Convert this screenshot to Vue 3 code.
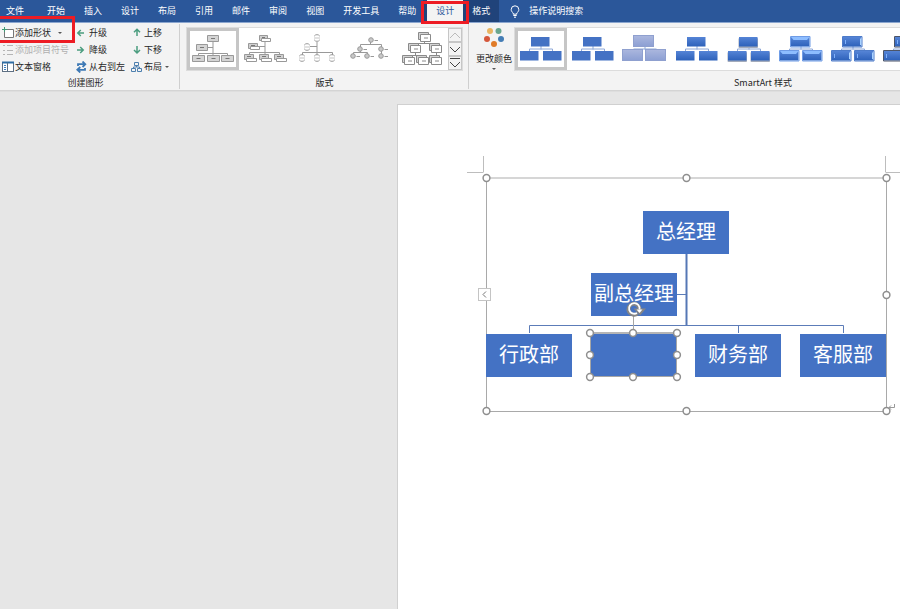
<script setup>
const tabs = ['开始', '插入', '设计', '布局', '引用', '邮件', '审阅', '视图', '开发工具', '帮助']

const nodes = [
  { id: 'gm', label: '总经理', x: 157, y: 33 },
  { id: 'vgm', label: '副总经理', x: 105, y: 95 },
  { id: 'admin', label: '行政部', x: 0, y: 156 },
  { id: 'blank', label: '', x: 105, y: 156 },
  { id: 'finance', label: '财务部', x: 209, y: 156 },
  { id: 'service', label: '客服部', x: 314, y: 156 },
]

const frameHandles = [
  [0, 0], [200, 0], [400, 0],
  [400, 117],
  [0, 233], [200, 233], [400, 233],
]

const shapeHandles = [
  [104, 155], [147, 155], [191, 155],
  [104, 177], [191, 177],
  [104, 199], [147, 199], [191, 199],
]

const styles = [
  { id: 's1', name: '简单填充', fill: '#4472c4' },
  { id: 's2', name: '白色轮廓', fill: '#4472c4' },
  { id: 's3', name: '细微效果', fill: 'url(#pale)', edge: '#8fa0cf', big: true },
  { id: 's4', name: '中等效果', fill: 'url(#deep)' },
  { id: 's5', name: '强烈效果', fill: 'url(#deep)', shadow: true },
  { id: 's6', name: '优雅', fill: 'url(#deep)', gloss: true },
  { id: 's7', name: '嵌入', fill: 'url(#deep)', inset: true },
  { id: 's8', name: '卡通', fill: 'url(#deep)', inset: true, edge: '#4c5568' },
  { id: 's9', name: '砖块', fill: '#4472c4' },
  { id: 's10', name: '平面', fill: '#4472c4' },
]

const cells = [
  { x: 16, y: 9 },
  { x: 5, y: 23 },
  { x: 28, y: 23 },
]
</script>

<template>
  <div class="app">
    <nav class="tabs" aria-label="功能区">
      <button class="tab file">文件</button>
      <button v-for="t in tabs" :key="t" class="tab">{{ t }}</button>
      <div class="context">
        <button class="tab active">设计</button>
        <button class="tab">格式</button>
        <span class="mark mark-tab"></span>
      </div>
      <button class="tab tell">
        <svg width="10" height="13" viewBox="0 0 10 13" fill="none" stroke="#fff">
          <path d="M3.2 9.2V8C2 7 1.2 6 1.2 4.6A3.8 3.8 0 0 1 8.8 4.6C8.8 6 8 7 6.8 8V9.2Z" />
          <path d="M3.3 10.5H6.7M4 12.2H6" />
        </svg>
        操作说明搜索
      </button>
    </nav>

    <div class="ribbon">
      <section class="group create">
        <div class="commands">
          <div class="column first">
            <button class="cmd">
              <svg width="13" height="12" viewBox="0 0 13 12" fill="none">
                <path d="M5 2.5H11.5V10.500H2.500V5" fill="#fff" stroke="#777" />
                <path d="M2.500 0V5M0 2.500H5" stroke="#3f9c75" />
              </svg>
              添加形状
              <i class="caret wide"></i>
            </button>
            <button class="cmd" disabled>
              <svg width="13" height="12" viewBox="0 0 13 12" stroke="#b5b5b5">
                <path d="M1 1.500H3M1 6.500H3M1 10.500H3M5 1.500H11M5 6.500H11M5 10.500H11" />
              </svg>
              添加项目符号
            </button>
            <button class="cmd">
              <svg width="13" height="12" viewBox="0 0 13 12" fill="none">
                <rect x="0.500" y="1.500" width="11" height="9" fill="#fff" stroke="#5d6f83" />
                <path d="M0 1.500H12" stroke="#2e6da4" stroke-width="2" />
                <path d="M5.500 2V10" stroke="#5d6f83" />
                <path d="M2 4.500H4M2 6.500H4M2 8.500H4" stroke="#3c7fc0" />
              </svg>
              文本窗格
            </button>
          </div>
          <div class="column second">
            <button class="cmd">
              <svg width="13" height="12" viewBox="0 0 13 12" fill="none" stroke="#4b9d7f" stroke-width="1.500">
                <path d="M8 6H2M4.800 3L1.800 6L4.800 9" />
              </svg>
              升级
            </button>
            <button class="cmd">
              <svg width="13" height="12" viewBox="0 0 13 12" fill="none" stroke="#4b9d7f" stroke-width="1.500">
                <path d="M1 6H7M4.200 3L7.200 6L4.200 9" />
              </svg>
              降级
            </button>
            <button class="cmd">
              <svg width="13" height="12" viewBox="0 0 13 12" fill="none" stroke="#3e79b5" stroke-width="1.800">
                <path d="M2 5V3.200H9M6.500 0.500L9.300 3.200L6.500 6" />
                <path d="M9 7V8.800H2M4.300 6L1.300 8.800L4.300 11.500" />
              </svg>
              从右到左
            </button>
          </div>
          <div class="column third">
            <button class="cmd">
              <svg width="13" height="12" viewBox="0 0 13 12" fill="none" stroke="#4b9d7f" stroke-width="1.500">
                <path d="M6 9V3M3 5.200L6 2.200L9 5.200" />
              </svg>
              上移
            </button>
            <button class="cmd">
              <svg width="13" height="12" viewBox="0 0 13 12" fill="none" stroke="#4b9d7f" stroke-width="1.500">
                <path d="M6 2V8.500M3 6L6 9L9 6" />
              </svg>
              下移
            </button>
            <button class="cmd">
              <svg width="13" height="12" viewBox="0 0 13 12" fill="none" stroke="#4c7fae">
                <path d="M3.500 1.500H7.500V4.500H3.500ZM0.500 7.500H4.500V10.500H0.500ZM6.500 7.500H10.500V10.500H6.500ZM5.500 4.500V6M2.500 7.500V6H8.500V7.500" />
              </svg>
              布局
              <i class="caret"></i>
            </button>
          </div>
          <span class="mark mark-add"></span>
        </div>
        <h2>创建图形</h2>
      </section>

      <section class="group layouts">
        <div class="gallery">
          <button class="item selected" aria-label="组织结构图">
            <svg width="52" height="42" viewBox="0 0 52 42" fill="#d4d4d4" stroke="#999">
              <path d="M26 13V28M21 19.500H26M11.500 28V25.500H40.500V28" fill="none" />
              <path d="M20.500 7.500H31.500V13.500H20.500ZM9.500 16.500H20.500V22.500H9.500ZM5.500 27.500H17.500V33.500H5.500ZM20.500 27.500H32.500V33.500H20.500ZM34.500 27.500H46.500V33.500H34.500Z" />
              <path d="M24 10.500H28M13 19.500H17M9.500 30.500H13.500M24.500 30.500H28.500M38.500 30.500H42.500" stroke="#777" />
            </svg>
          </button>
          <button class="item" aria-label="姓名和职务组织结构图">
            <svg width="52" height="42" viewBox="0 0 52 42" fill="#d0d0d0" stroke="#999">
              <path d="M26 13V26M19 18.500H26M10.500 26V24.500H40.500V26" fill="none" />
              <path d="M20.500 7.500H28.500V12.500H20.500ZM9.500 15.500H18.500V20.500H9.500ZM5.500 26.500H14.500V31.500H5.500ZM20.500 26.500H29.500V31.500H20.500ZM35.500 26.500H44.500V31.500H35.500Z" />
              <path d="M22.500 10.500H31.500V13.500H22.500ZM11.500 18.500H20.500V21.500H11.500ZM7.500 30.500H17.500V33.500H7.500ZM22.500 30.500H32.500V33.500H22.500ZM37.500 30.500H47.500V33.500H37.500Z" fill="#fff" />
              <path d="M23 9.500H26M12 17.500H16M8 28.500H12M23 28.500H27M38 28.500H42" stroke="#777" />
            </svg>
          </button>
          <button class="item" aria-label="半圆组织结构图">
            <svg width="52" height="42" viewBox="0 0 52 42" fill="none" stroke="#999">
              <path d="M26 14V27M19 18.500H26M11.500 27V24.500H41.500V27" />
              <g v-for="p in [[26, 10], [16, 19], [11, 30], [26, 30], [41, 30]]" :key="p.join()">
                <path :transform="`translate(${p[0]} ${p[1]})`" d="M-2.800 -1.800A3.300 3.300 0 0 1 2.800 -1.800M-2.800 1.800A3.300 3.300 0 0 0 2.800 1.800" />
                <path :transform="`translate(${p[0]} ${p[1]})`" d="M-3 0H3" stroke="#c4c4c4" />
              </g>
            </svg>
          </button>
          <button class="item" aria-label="圆形图片层次结构">
            <svg width="52" height="42" viewBox="0 0 52 42" fill="#c9c9c9" stroke="#999">
              <path d="M27.500 14V16.500M17.500 19V16.500H38.500V28M17.500 22V24.500M10.500 27V24.500H24.500V27" fill="none" />
              <g v-for="p in [[28, 12], [17, 21], [38, 21], [10, 28], [24, 28], [38, 28]]" :key="p.join()">
                <circle :cx="p[0]" :cy="p[1]" r="2.300" />
                <path :transform="`translate(${p[0]} ${p[1]})`" d="M3.500 0.500H7" />
              </g>
            </svg>
          </button>
          <button class="item" aria-label="层次结构">
            <svg width="52" height="42" viewBox="0 0 52 42" fill="#fff" stroke="#8a8a8a">
              <path d="M29.500 13V15.500M19.500 18V15.500H41.500V18M14.500 29V27.500H28.500V29M20.500 25V27.500M41.500 25V29" fill="none" />
              <g v-for="p in [[25, 6], [15, 17], [36, 17], [9, 29], [23, 29], [36, 29]]" :key="p.join()">
                <path :transform="`translate(${p[0]} ${p[1]})`" d="M-1.500 -1.500H8.500V5.500H-1.500Z" fill="#d4d4d4" />
                <path :transform="`translate(${p[0]} ${p[1]})`" d="M0.500 0.500H10.500V7.500H0.500ZM4 4H8" />
              </g>
            </svg>
          </button>
          <div class="scroller">
            <button aria-label="上一行" disabled>
              <svg width="12" height="12" viewBox="0 0 12 12" fill="none" stroke="#bbb"><path d="M1 9L6 4L11 9" /></svg>
            </button>
            <button aria-label="下一行">
              <svg width="12" height="12" viewBox="0 0 12 12" fill="none" stroke="#444"><path d="M1 4L6 9L11 4" /></svg>
            </button>
            <button aria-label="其他">
              <svg width="12" height="12" viewBox="0 0 12 12" fill="none" stroke="#444"><path d="M1 1.500H11M1 5L6 10L11 5" /></svg>
            </button>
          </div>
        </div>
        <h2>版式</h2>
      </section>

      <section class="group styles">
        <div class="row">
          <button class="colors">
            <svg width="22" height="22" viewBox="0 0 22 22">
              <circle cx="7" cy="4" r="3" fill="#e9b562" />
              <circle cx="15.500" cy="4" r="3" fill="#69a68e" />
              <circle cx="4" cy="12" r="3" fill="#d5573b" />
              <circle cx="18" cy="12" r="3" fill="#447db5" />
              <circle cx="11" cy="17" r="3" fill="#e07b28" />
            </svg>
            <span>更改颜色</span>
            <i class="caret"></i>
          </button>
          <div class="gallery">
            <button v-for="(s, i) in styles" :key="s.id" class="item" :class="{ selected: i === 0 }" :aria-label="s.name">
              <svg width="52" height="42" viewBox="0 0 52 42">
                <defs v-if="i === 0">
                  <linearGradient id="pale" x1="0" y1="0" x2="0" y2="1">
                    <stop offset="0" stop-color="#abb7de" /><stop offset="1" stop-color="#8c9fd3" />
                  </linearGradient>
                  <linearGradient id="deep" x1="0" y1="0" x2="0" y2="1">
                    <stop offset="0" stop-color="#5584d6" /><stop offset="1" stop-color="#2d61ba" />
                  </linearGradient>
                </defs>
                <path d="M26 18V21.500M14.500 23V21H37.500V23" fill="none" stroke="#8ea8d8" />
                <g v-for="c in cells" :key="c.x + s.id" :transform="`translate(${c.x} ${c.y})`">
                  <rect v-if="s.shadow" x="-0.500" y="1" width="19.500" height="10" rx="1" fill="#a3abbb" />
                  <rect v-if="s.big" x="-1.500" y="-1.500" width="20" height="11" :fill="s.fill" :stroke="s.edge" />
                  <rect v-else width="18.500" height="9.500" :fill="s.fill" />
                  <path v-if="s.gloss" d="M-0.500 -0.500H19V10H-0.500Z" fill="none" stroke="#6f9ce6" />
                  <path v-if="s.gloss" d="M0 0H18.500L16 3H2.500Z" fill="#8dbdff" />
                  <path v-if="s.inset" d="M-0.500 -0.500H19V10H-0.500Z" fill="none" :stroke="s.edge || '#4d7bc9'" />
                  <path v-if="s.inset" d="M18.500 0.500V9L17 7.500V2Z" fill="#a9d2ff" />
                  <path v-if="s.inset" d="M2.500 3V7" stroke="#7fb0fa" />
                </g>
              </svg>
            </button>
          </div>
        </div>
        <h2>SmartArt 样式</h2>
      </section>
    </div>

    <main class="workspace">
      <article class="page">
        <div class="diagram">
          <svg class="layer" width="434" height="270" viewBox="-20 -24 434 270" fill="none">
            <path d="M-2.500 -22V-6M-19 -5.500H-2.500M399.500 -22V-6M399.500 -5.500H414" stroke="#bdbdbd" />
            <path d="M0.500 0V233.500H400.500V0" stroke="#a9a9a9" />
            <path d="M0 0H400" stroke="#d6d6d6" stroke-width="2" />
            <path d="M200.500 76V147" stroke="#5577b5" stroke-width="2" />
            <path d="M191 116.500H200M43.500 155V147.500H357.500V155M147.500 147V155M252.500 147V155" stroke="#5c7cb8" />
          </svg>
          <div
            v-for="n in nodes"
            :key="n.id"
            class="node"
            :style="{ left: n.x + 'px', top: n.y + 'px' }"
          >{{ n.label }}</div>
          <svg class="layer" width="434" height="270" viewBox="-20 -24 434 270" fill="none">
            <path d="M400.500 0V233" stroke="#a9a9a9" />
            <rect x="104.500" y="155.500" width="86" height="43" stroke="#a6a6a6" />
            <path d="M104 155H191" stroke="#b5b5b5" stroke-width="2" />
            <path d="M147.500 137V152" stroke="#a6a6a6" />
            <g stroke="#8f8f8f" stroke-width="1.500" fill="#fff">
              <circle v-for="h in frameHandles" :key="'f' + h" :cx="h[0] + 0.5" :cy="h[1]" r="3.400" />
              <circle v-for="h in shapeHandles" :key="'s' + h" :cx="h[0]" :cy="h[1]" r="3.400" />
            </g>
            <path d="M151.500 135.500A5.500 5.500 0 1 1 153.500 131" stroke="#858585" stroke-width="4" />
            <path d="M147.500 130.500H160L154 137.500Z" fill="#858585" />
            <path d="M151 135A5.300 5.300 0 1 1 153.500 131.500" stroke="#fff" stroke-width="1.800" />
            <path d="M150.500 131.500H156.500L153.500 135Z" fill="#fff" />
            <path d="M408.500 226V229.500H403M405 227.500L403 229.500L405 231.500" stroke="#999" />
          </svg>
          <button class="pane" aria-label="文本窗格">
            <svg width="5" height="7" viewBox="0 0 5 7" fill="none" stroke="#777"><path d="M4 0.500L1 3.500L4 6.500" /></svg>
          </button>
        </div>
      </article>
    </main>
  </div>
</template>

<style>
body {
  margin: 0;
}
</style>

<style scoped>
.app {
  display: flex;
  flex-direction: column;
  min-height: 100vh;
  overflow: hidden;
  background: #e6e6e6;
  color: #262626;
  font: 9px/12px "Noto Sans CJK SC", sans-serif;
}

button {
  margin: 0;
  padding: 0;
  border: 0;
  background: none;
  color: inherit;
  font: inherit;
  white-space: nowrap;
}

svg {
  display: block;
  flex: none;
}

.tabs {
  display: flex;
  gap: 19px;
  height: 22px;
  padding-left: 6px;
  background: #2b579a;
  border-bottom: 1px solid #8ba6cf;
  color: #fff;
}

.file {
  margin-right: 4px;
}

.context {
  position: relative;
  display: flex;
  margin-left: -12px;
  padding-left: 4px;
  background: #20437a;
}

.context .tab {
  padding: 0 9px;
}

.context .active {
  background: #f3f3f3;
  color: #2b579a;
}

.tell {
  display: flex;
  align-items: center;
  gap: 9px;
  margin-left: -8px;
}

.mark {
  position: absolute;
  border: 3px solid #ed1c24;
  pointer-events: none;
}

.mark-tab {
  top: 1px;
  left: -2px;
  width: 42px;
  height: 17px;
}

.mark-add {
  top: -8px;
  left: -3px;
  width: 72px;
  height: 21px;
}

.ribbon {
  display: flex;
  height: 67px;
  background: #f3f3f3;
  border-bottom: 1px solid #d4d4d4;
  box-shadow: 0 1px 0 #dedede;
}

.group {
  display: flex;
  flex: none;
  flex-direction: column;
  justify-content: space-between;
  box-sizing: border-box;
  margin: 1px 0;
  border-right: 1px solid #cfcfcf;
}

h2 {
  margin: 0;
  font-size: 9px;
  font-weight: 400;
  line-height: 12px;
  text-align: center;
}

.create {
  width: 180px;
}

.create h2 {
  padding-right: 8px;
}

.commands {
  position: relative;
  display: flex;
  padding-left: 2px;
}

.column {
  display: flex;
  flex-direction: column;
}

.first {
  width: 74px;
}

.second {
  width: 55px;
}

.cmd {
  display: flex;
  align-items: center;
  height: 17px;
}

.cmd:disabled {
  color: #b0b0b0;
}

.caret {
  margin-left: 3px;
  border: 2px solid transparent;
  border-top-color: #555;
  border-bottom-width: 0;
}

.caret.wide {
  margin-left: 7px;
}

.layouts {
  padding: 3px 5px 0 6px;
}

.gallery {
  display: flex;
  box-sizing: border-box;
  height: 44px;
  border: 1px solid #dcdcdc;
  background: #fff;
}

.item {
  position: relative;
  flex: none;
}

.item.selected::after {
  content: "";
  position: absolute;
  inset: 0;
  border: 3px solid #c6c6c6;
}

.scroller {
  display: flex;
  flex-direction: column;
  margin-left: 1px;
  background: #f3f3f3;
}

.scroller button {
  display: flex;
  flex: 1;
  align-items: center;
  border: 1px solid #c6c6c6;
}

.styles {
  padding: 3px 24px 0 7px;
}

.styles h2 {
  padding-left: 14px;
}

.row {
  display: flex;
  gap: 2px;
}

.colors {
  display: flex;
  flex-direction: column;
  align-items: center;
  justify-content: space-between;
}

.colors .caret {
  margin: 0 0 1px;
}

.workspace {
  display: flex;
  flex: 1;
  padding: 13px 0 0 397px;
}

.page {
  flex: 1;
  padding: 73px 0 0 88px;
  border: 1px solid #d0d0d0;
  border-width: 1px 0 0 1px;
  background: #fff;
}

.diagram {
  position: relative;
  width: 400px;
  height: 233px;
}

.layer {
  position: absolute;
  top: -24px;
  left: -20px;
}

.node {
  position: absolute;
  box-sizing: border-box;
  width: 86px;
  height: 43px;
  padding-bottom: 4px;
  background: #4472c4;
  color: #fff;
  font-size: 20px;
  font-weight: 400;
  line-height: 39px;
  text-align: center;
  white-space: nowrap;
}

.pane {
  position: absolute;
  top: 110px;
  left: -8px;
  display: flex;
  align-items: center;
  justify-content: center;
  width: 13px;
  height: 13px;
  border: 1px solid #c4c4c4;
  background: #fff;
}
</style>
